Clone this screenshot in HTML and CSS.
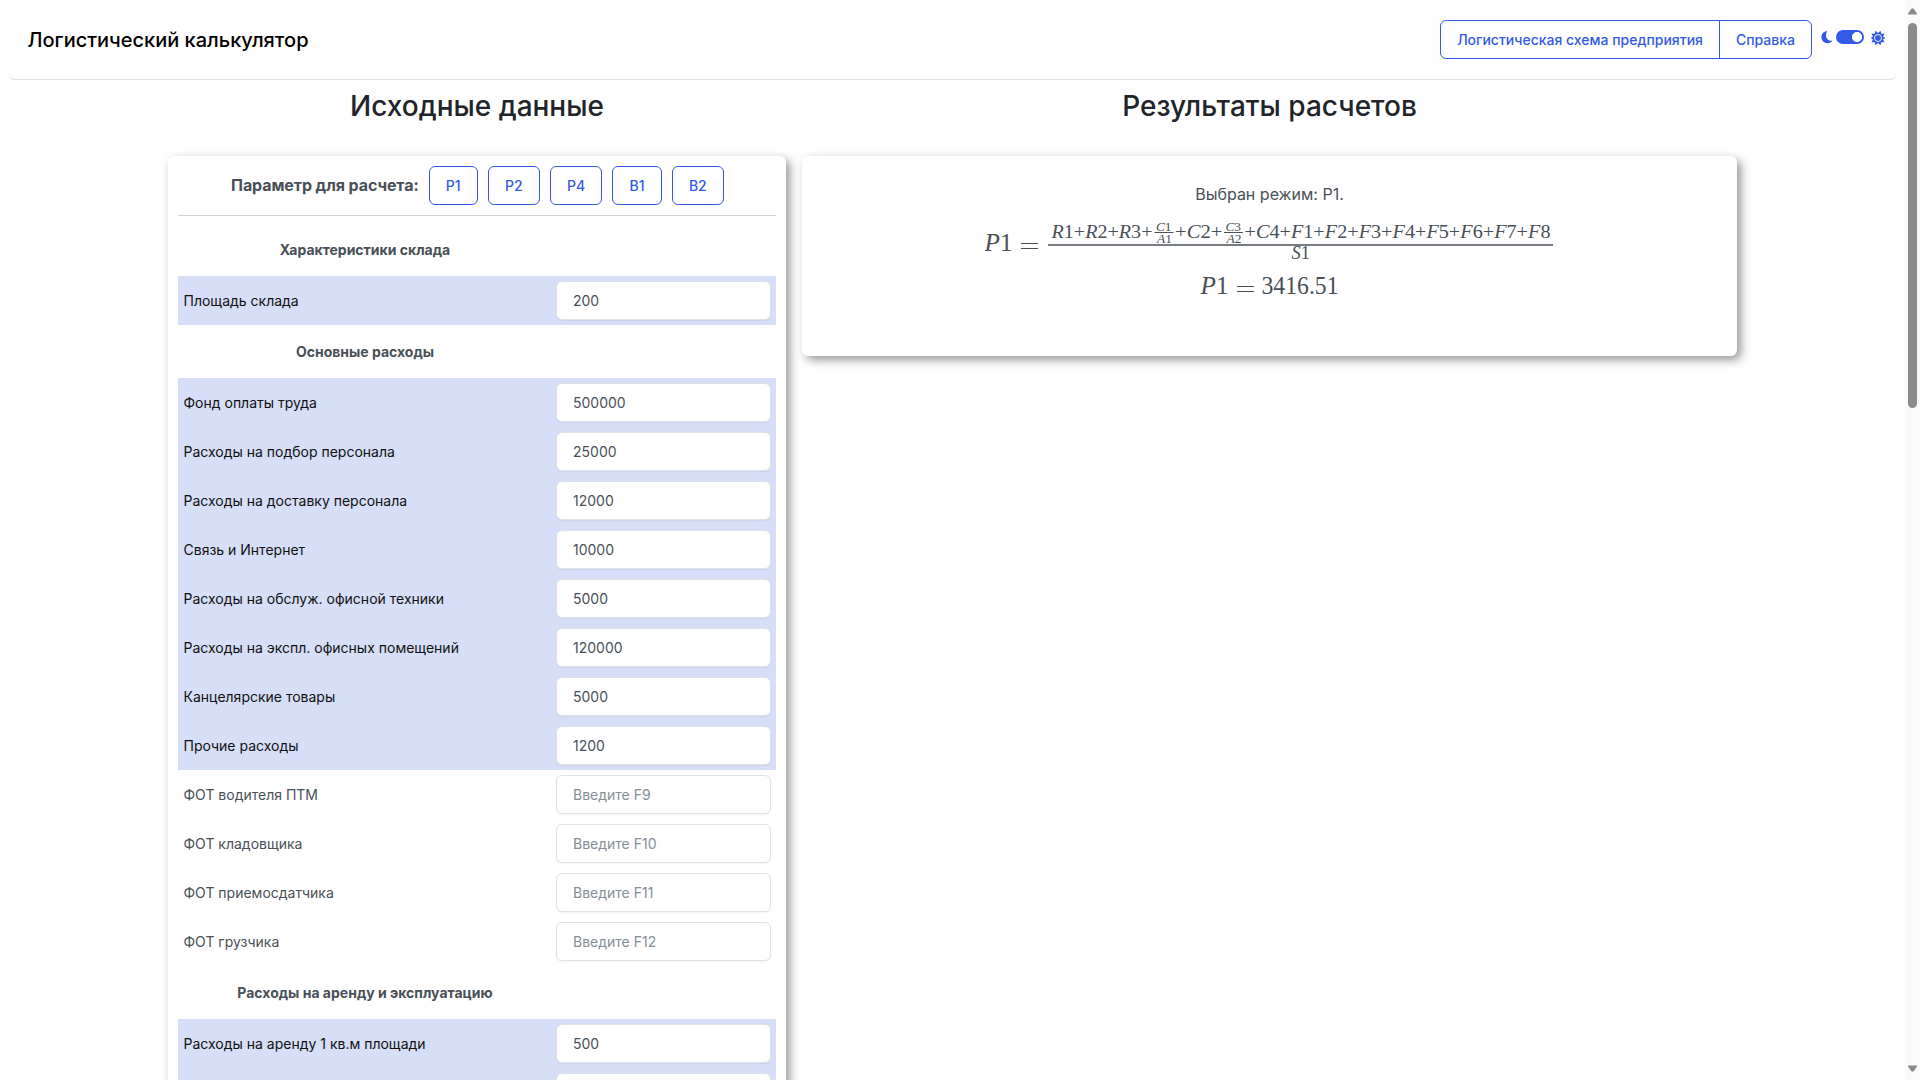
FILE: index.html
```html
<!DOCTYPE html>
<html lang="ru">
<head>
<meta charset="utf-8">
<title>Логистический калькулятор</title>
<link rel="stylesheet" href="styles.css">
</head>
<body>
<div class="page">
  <header class="navbar">
    <div class="brand">Логистический калькулятор</div>
    <div class="btn-group"><a class="btn">Логистическая схема предприятия</a><a class="btn">Справка</a></div>
    <div class="theme">
      <svg class="moon" width="12" height="14" viewBox="0 0 12 14"><path d="M6.200.9C2.600 1.300.4 4 .4 7c0 3.500 2.700 6.200 6.100 6.200 2.200 0 4-.9 5.100-2.400C7.600 11.200 5 8.700 5 5.200c0-1.600.4-3 1.200-4.300z"/></svg>
      <span class="switch"></span>
      <svg class="sun" width="16" height="16" viewBox="0 0 16 16"><path d="M5.500.8 8 3 10.500.8l.8 3 3.300-.1L13 6.500 15.300 8 13 9.500l1.600 2.800-3.300-.1-.8 3L8 13l-2.500 2.200-.8-3-3.300.1L3 9.500.7 8 3 6.500 1.400 3.700l3.300.1z"/><circle cx="8" cy="8" r="3.500" class="sun-ring"/></svg>
    </div>
  </header>
  <main class="columns">
    <section>
      <h2>Исходные данные</h2>
      <div class="card inputs">
        <div class="modes"><b>Параметр для расчета:</b><a class="btn">P1</a><a class="btn">P2</a><a class="btn">P4</a><a class="btn">B1</a><a class="btn">B2</a></div>
        <div class="group first">Характеристики склада</div>
        <div class="row used"><label>Площадь склада</label><input value="200"></div>
        <div class="group">Основные расходы</div>
        <div class="row used"><label>Фонд оплаты труда</label><input value="500000"></div>
        <div class="row used"><label>Расходы на подбор персонала</label><input value="25000"></div>
        <div class="row used"><label>Расходы на доставку персонала</label><input value="12000"></div>
        <div class="row used"><label>Связь и Интернет</label><input value="10000"></div>
        <div class="row used"><label>Расходы на обслуж. офисной техники</label><input value="5000"></div>
        <div class="row used"><label>Расходы на экспл. офисных помещений</label><input value="120000"></div>
        <div class="row used"><label>Канцелярские товары</label><input value="5000"></div>
        <div class="row used"><label>Прочие расходы</label><input value="1200"></div>
        <div class="row"><label>ФОТ водителя ПТМ</label><input placeholder="Введите F9"></div>
        <div class="row"><label>ФОТ кладовщика</label><input placeholder="Введите F10"></div>
        <div class="row"><label>ФОТ приемосдатчика</label><input placeholder="Введите F11"></div>
        <div class="row"><label>ФОТ грузчика</label><input placeholder="Введите F12"></div>
        <div class="group">Расходы на аренду и эксплуатацию</div>
        <div class="row used"><label>Расходы на аренду 1 кв.м площади</label><input value="500"></div>
        <div class="row used"><label></label><input></div>
      </div>
    </section>
    <section>
      <h2>Результаты расчетов</h2>
      <div class="card results">
        <p>Выбран режим: P1.</p>
        <svg class="formula" width="570" height="86" viewBox="985 216 570 86">
          <g class="big">
            <text x="984.500" y="250.500" textLength="28" lengthAdjust="spacingAndGlyphs" class="v">P<tspan class="n">1</tspan></text>
            <text x="1200.500" y="293.500" textLength="28" lengthAdjust="spacingAndGlyphs" class="v">P<tspan class="n">1</tspan></text>
            <text x="1261.500" y="293.500" textLength="77" lengthAdjust="spacingAndGlyphs">3416.51</text>
          </g>
          <path class="rule" d="M1021 243.500h17M1021 248.500h17M1237 286.500h17M1237 291.500h17M1154.500 232.500h19M1224 232.500h19"/>
          <path class="bar" d="M1048 245h505"/>
          <g class="mid">
            <text x="1051.500" y="237.500" textLength="101" lengthAdjust="spacingAndGlyphs" class="v">R<tspan class="n">1+</tspan>R<tspan class="n">2+</tspan>R<tspan class="n">3+</tspan></text>
            <text x="1175" y="237.500" textLength="47.500" lengthAdjust="spacingAndGlyphs">+<tspan class="v">C</tspan>2+</text>
            <text x="1244.500" y="237.500" textLength="306" lengthAdjust="spacingAndGlyphs">+<tspan class="v">C</tspan>4+<tspan class="v">F</tspan>1+<tspan class="v">F</tspan>2+<tspan class="v">F</tspan>3+<tspan class="v">F</tspan>4+<tspan class="v">F</tspan>5+<tspan class="v">F</tspan>6+<tspan class="v">F</tspan>7+<tspan class="v">F</tspan>8</text>
            <text x="1291.500" y="259" textLength="18.500" lengthAdjust="spacingAndGlyphs" class="v">S<tspan class="n">1</tspan></text>
          </g>
          <g class="small">
            <text x="1156" y="230.500" textLength="15.500" lengthAdjust="spacingAndGlyphs" class="v">C<tspan class="n">1</tspan></text>
            <text x="1157" y="243" textLength="15" lengthAdjust="spacingAndGlyphs" class="v">A<tspan class="n">1</tspan></text>
            <text x="1225.500" y="230.500" textLength="15.500" lengthAdjust="spacingAndGlyphs" class="v">C<tspan class="n">3</tspan></text>
            <text x="1226.500" y="243" textLength="15" lengthAdjust="spacingAndGlyphs" class="v">A<tspan class="n">2</tspan></text>
          </g>
        </svg>
      </div>
    </section>
  </main>
</div>
<aside class="scrollbar">
  <svg width="9" height="7" viewBox="0 0 9 7"><path d="M0 6.500V5.500L3.500.5h2L9 5.500v1z"/></svg>
  <i class="thumb"></i>
  <svg class="down" width="9" height="7" viewBox="0 0 9 7"><path d="M0 .5v1l3.500 5h2L9 1.500v-1z"/></svg>
</aside>
</body>
</html>
```
FILE: styles.css
```css
* { box-sizing: border-box; }
body { margin: 0; height: 1080px; overflow: hidden; display: flex; background: #fefefe; font: 14px/21px Inter, sans-serif; color: #495057; }
.page { width: 1905px; height: 1080px; overflow: hidden; padding: 0 9px; }
.navbar { height: 80px; border-bottom: 1px solid #dee2e6; border-radius: 6px; display: flex; align-items: flex-start; padding: 20px 10px 0 18.500px; }
.brand { font-size: 20px; line-height: 41px; font-weight: 500; color: #000; margin-right: auto; }
.btn { display: inline-block; height: 39px; line-height: 38px; padding: 0 16px; border: 1px solid #3459e6; border-radius: 6px; color: #3459e6; font-weight: 500; }
.btn-group { display: flex; }
.btn-group .btn:first-child { border-radius: 6px 0 0 6px; }
.btn-group .btn:last-child { border-radius: 0 6px 6px 0; margin-left: -1px; }
.theme { display: flex; align-items: center; height: 14px; margin: 10px 0 0 9px; fill: #3459e6; }
.switch { width: 28px; height: 14px; border-radius: 7px; margin: 0 6px 0 3px; background: radial-gradient(circle at 21px 7px, #fff 4.700px, #3459e6 5.300px); }
.sun { position: relative; top: .5px; }
.sun-ring { stroke: #fff; stroke-width: .9; }
.columns { display: grid; grid-template-columns: 618px 935px; gap: 16px; margin-left: 159px; }
h2 { margin: 9px 0 32px; font-size: 28px; line-height: 35px; font-weight: 500; color: #212529; text-align: center; }
.card { background: #fff; border-radius: 6px; box-shadow: 4px 4px 10px rgba(0,0,0,.4); }
.inputs { padding: 10px 10px 0; height: 1000px; }
.modes { display: flex; justify-content: center; align-items: center; gap: 10px; padding: 0 0 10px 1px; border-bottom: 1px solid #ced4da; }
.modes b { font-size: 16px; font-weight: 700; letter-spacing: -.1px; }
.modes .btn { padding: 0 16.200px; }
.group { width: 374px; height: 53px; line-height: 53px; text-align: center; font-weight: 700; }
.group.first { margin-top: 7px; }
.row { height: 49px; padding: 0 5px 0 5.500px; display: flex; align-items: center; justify-content: space-between; }
.used { background: #d6def8; }
.used label { color: #111; }
input { width: 215px; height: 39px; padding: 0 16px; border: 1px solid #dee2e6; border-radius: 6px; background: #fff; font: 14px Inter, sans-serif; color: #495057; box-shadow: 0 1px 2px rgba(0,0,0,.05); }
input::placeholder { color: #868e96; opacity: 1; }
.results { height: 200px; padding-top: 26px; text-align: center; }
.results p { margin: 0; font-size: 16px; line-height: 24px; }
.formula { display: block; margin: 10px auto 0; fill: #495057; font-family: "Liberation Serif", serif; }
.v { font-style: italic; }
.n { font-style: normal; }
.big { font-size: 25px; }
.mid { font-size: 18px; }
.small { font-size: 13px; }
.rule { stroke: #495057; stroke-width: 1; }
.bar { stroke: #495057; stroke-width: 1.500; }
.scrollbar { width: 15px; height: 1080px; padding: 8px 3px; background: #fafafa; display: flex; flex-direction: column; fill: #8b8b8b; }
.thumb { height: 385px; margin-top: 8px; border-radius: 5px; background: #8b8b8b; }
.down { margin-top: auto; }
```
